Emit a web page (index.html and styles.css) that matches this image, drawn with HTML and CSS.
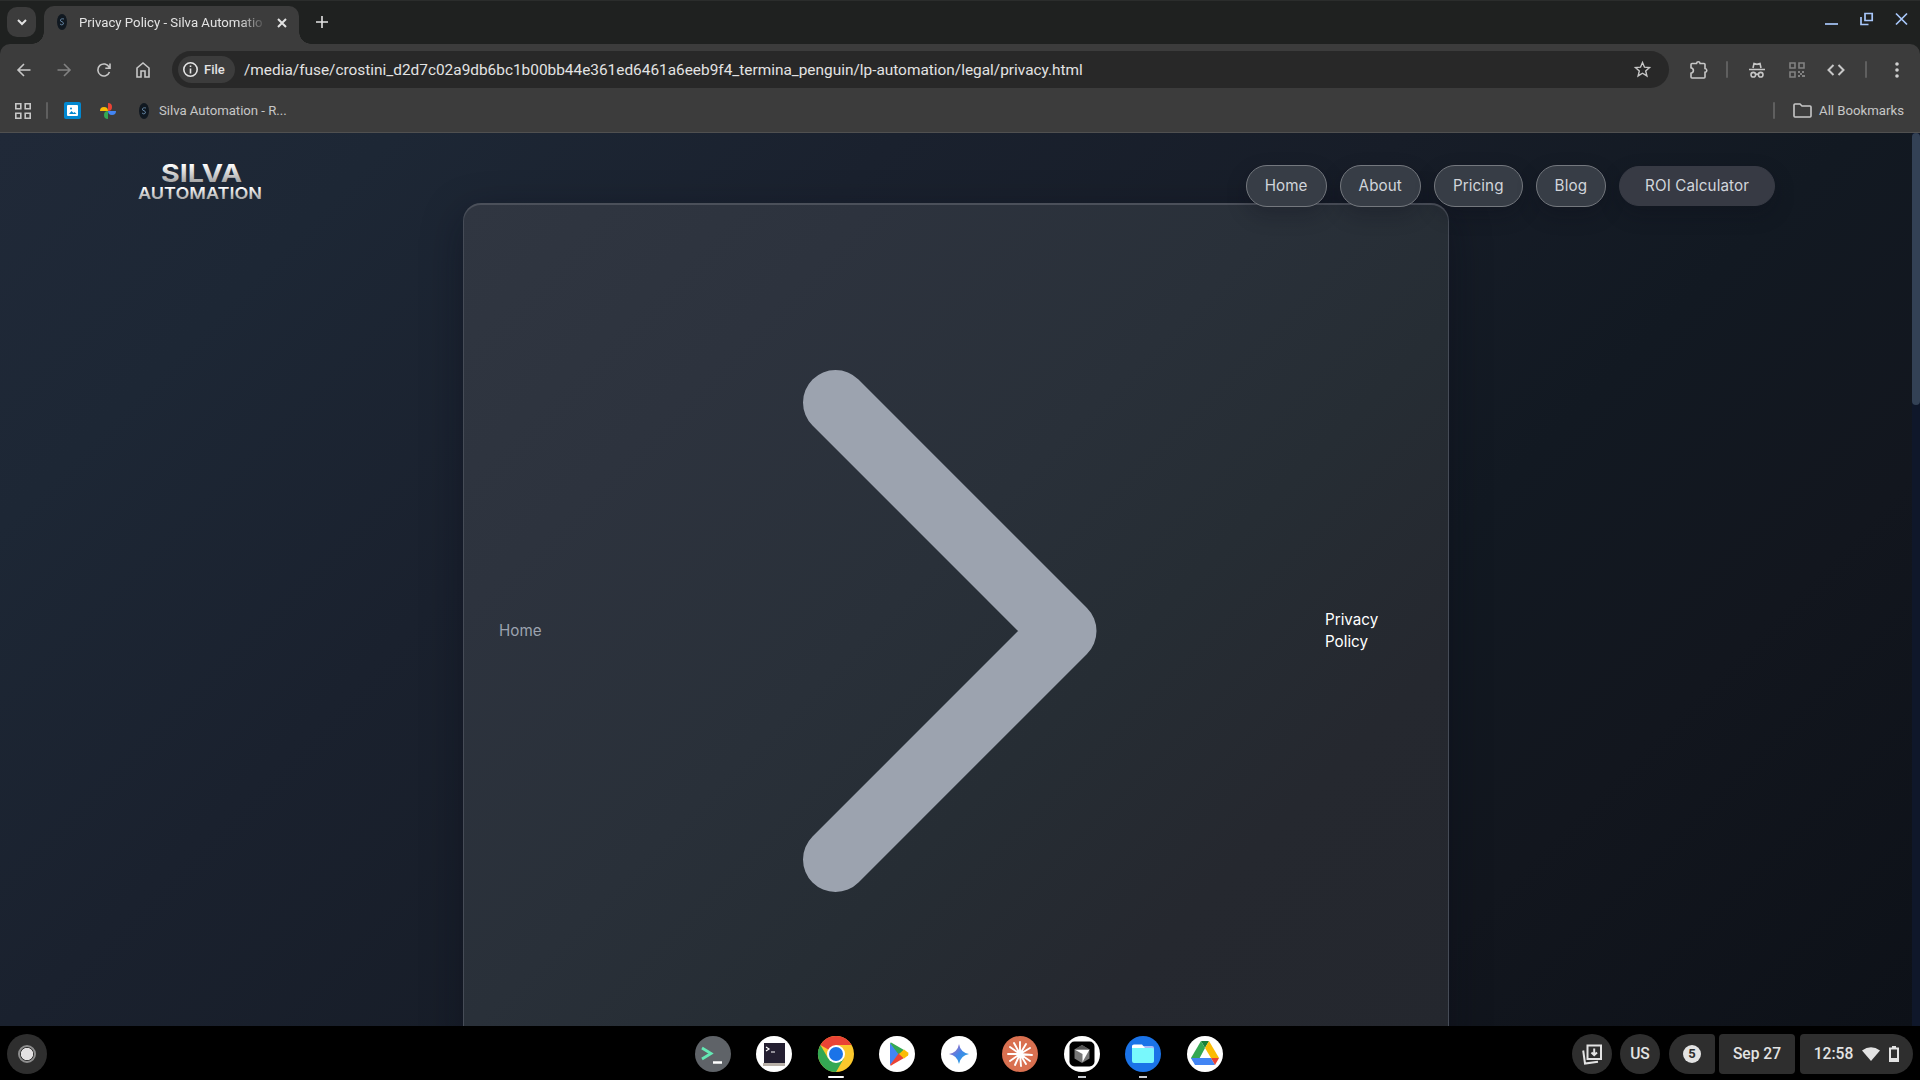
FILE: index.html
```
<!DOCTYPE html>
<html lang="en">
<head>
<meta charset="utf-8">
<title>Privacy Policy - Silva Automation</title>
<link rel="stylesheet" href="styles.css">
</head>
<body>
<div class="screen">
  <div class="tabstrip">
    <div class="tab-search"><svg width="12" height="12" viewBox="0 0 12 12"><path d="M2 4l4 4 4-4" class="line bright w2"/></svg></div>
    <div class="tab">
      <svg class="fav" width="12" height="18" viewBox="0 0 12 18"><ellipse cx="6" cy="9" rx="5" ry="8" fill="#101820"/><path d="M8 6Q4 5 4.500 8Q8 9 7.500 11Q6 13 4 11" fill="none" stroke="#607f9c"/></svg>
      <span class="tab-title">Privacy Policy - Silva Automation</span>
      <svg class="tab-close" width="10" height="10" viewBox="0 0 10 10"><path d="M1 1l8 8M9 1l-8 8" class="line bright w2"/></svg>
    </div>
    <svg class="new-tab" width="12" height="12" viewBox="0 0 12 12"><path d="M6 0v12M0 6h12" class="line bright"/></svg>
    <div class="window-controls">
      <svg width="13" height="14" viewBox="0 0 13 14"><path d="M0 12h13" class="win"/></svg>
      <svg width="13" height="14" viewBox="0 0 13 14"><path d="M5 1.500h7.200v7H5zM1 5v7.500h7.500" class="win"/></svg>
      <svg width="13" height="14" viewBox="0 0 13 14"><path d="M1 1.500l11 11M12 1.500l-11 11" class="win"/></svg>
    </div>
  </div>

  <div class="browser-frame">
  <div class="browser-bars">
    <div class="toolbar">
      <div class="nav-icons">
        <svg width="14" height="14" viewBox="0 0 14 14"><path d="M13.500 7H1M7 1L1 7l6 6" class="line"/></svg>
        <svg class="dim" width="14" height="14" viewBox="0 0 14 14"><path d="M.5 7H13M7 1l6 6-6 6" class="line"/></svg>
        <svg width="14" height="14" viewBox="0 0 14 14"><path d="M12.500 9A6 6 0 1 1 12.200 4.200M13 .5v4.700H8.300" class="line"/></svg>
        <svg class="house" width="14" height="16" viewBox="0 0 14 16"><path d="M1 15V6l6-5 6 5v9H9V9H5v6z" class="line"/></svg>
      </div>
      <div class="omnibox">
        <div class="file-chip"><svg width="15" height="15" viewBox="0 0 15 15"><circle cx="7.500" cy="7.500" r="6.700" class="line bright"/><path d="M7.500 6.500v5M7.500 3.500v1.600" class="line bright"/></svg>File</div>
        <span class="url">/media/fuse/crostini_d2d7c02a9db6bc1b00bb44e361ed6461a6eeb9f4_termina_penguin/lp-automation/legal/privacy.html</span>
        <svg width="17" height="17" viewBox="0 0 17 17"><path d="M8.500 1.500l2 4.700 5 .4-3.800 3.300 1.200 5-4.400-2.700-4.400 2.700 1.200-5L1.500 6.600l5-.4z" class="line thin"/></svg>
      </div>
      <div class="ext-icons">
        <svg class="puzzle" width="18" height="18" viewBox="0 0 18 18"><path d="M2 2.500h4.500q.3-1.700 1.800-1.700t1.800 1.700H14q1 0 1 1v4q1.800.3 1.800 1.900T15 11.300V16q0 1-1 1H2q-1 0-1-1v-3.800q2.400-.6 2.400-2.700T1 6.800V3.500q0-1 1-1z" class="line"/></svg>
        <i class="bar"></i>
        <svg class="incognito" width="16" height="16" viewBox="0 0 16 16"><path d="M4 6l1-4.500 3 .8 3-.8L12 6M0 7.500h16M6.800 12.500q1.200-.8 2.400 0" class="line"/><circle cx="4.300" cy="12.700" r="2.300" class="line"/><circle cx="11.700" cy="12.700" r="2.300" class="line"/></svg>
        <svg class="qr dim" width="16" height="16" viewBox="0 0 16 16"><path d="M1 1h5v5H1zM10 1h5v5h-5zM1 10h5v5H1z" class="line"/><path d="M9 9h2v2H9zM13 9h2v2h-2zM11 11h2v2h-2zM9 13h2v2H9zM13 13h3v2h-3z" fill="#c7c7c7"/></svg>
        <svg class="code" width="18" height="12" viewBox="0 0 18 12"><path d="M6.500 1L1.500 6l5 5M11.500 1l5 5-5 5" class="line w2"/></svg>
        <i class="bar b2"></i>
        <svg class="menu" width="4" height="16" viewBox="0 0 4 16"><g fill="#d0d0d0"><circle cx="2" cy="2" r="1.800"/><circle cx="2" cy="8" r="1.800"/><circle cx="2" cy="14" r="1.800"/></g></svg>
      </div>
    </div>
    <div class="bookmarks">
      <svg width="16" height="16" viewBox="0 0 16 16"><path d="M.8.800h5v5h-5zM10.200.800h5v5h-5zM.8 10.200h5v5h-5zM10.200 10.200h5v5h-5z" class="line"/></svg>
      <i class="bar bm1"></i>
      <svg class="picture" width="17" height="17" viewBox="0 0 17 17"><rect width="17" height="17" rx="2" fill="#0288d1"/><rect x="3" y="3" width="11" height="11" rx="1" fill="#fff"/><path d="M5 12l2.500-3 2 2 1-1 2 2z" fill="#0288d1"/><circle cx="7" cy="6.500" r="1" fill="#0288d1"/></svg>
      <svg class="photos" width="16" height="16" viewBox="0 0 16 16"><path d="M8 0a4 4 0 0 1 0 8z" fill="#ea4335"/><path d="M0 8a4 4 0 0 1 8 0z" fill="#fbbc04"/><path d="M8 16a4 4 0 0 1 0-8z" fill="#34a853"/><path d="M16 8a4 4 0 0 1-8 0z" fill="#4285f4"/></svg>
      <svg class="bm-fav" width="12" height="18" viewBox="0 0 12 18"><ellipse cx="6" cy="9" rx="5" ry="8" fill="#101820"/><path d="M8 6Q4 5 4.500 8Q8 9 7.500 11Q6 13 4 11" fill="none" stroke="#607f9c"/></svg>
      <span class="bm-title">Silva Automation - R...</span>
      <i class="bar bm2"></i>
      <svg width="19" height="15" viewBox="0 0 19 15"><path d="M1 2q0-1 1-1h5l2 2h8q1 0 1 1v9q0 1-1 1H2q-1 0-1-1z" class="line"/></svg>
      <span class="all">All Bookmarks</span>
    </div>
  </div>
  </div>

  <div class="page">
    <header class="site-header">
      <div class="brand">
        <svg width="126" height="44" viewBox="0 0 126 44">
          <defs><linearGradient id="metal" x1="0" y1="0" x2="0" y2="1"><stop offset=".2" stop-color="#fff"/><stop offset=".85" stop-color="#a0a0a0"/></linearGradient></defs>
          <text x="23" y="21.500" textLength="81" lengthAdjust="spacingAndGlyphs" class="brand-top">SILVA</text>
          <text x="0" y="39.200" textLength="124" lengthAdjust="spacingAndGlyphs" class="brand-sub">AUTOMATION</text>
        </svg>
      </div>
      <nav class="site-nav">
        <a class="pill">Home</a><a class="pill">About</a><a class="pill">Pricing</a><a class="pill">Blog</a><a class="pill cta">ROI Calculator</a>
      </nav>
    </header>
    <main class="crumbs">
      <span class="crumb-home">Home</span>
      <svg class="chevron" width="294" height="524" viewBox="0 0 294 524"><path d="M32.500 33.500L261 262 32.500 490.500"/></svg>
      <span class="crumb-now">Privacy Policy</span>
    </main>
    <div class="scroll-thumb"></div>
  </div>

  <div class="shelf">
    <div class="launcher"><i></i></div>
    <div class="apps">
      <svg width="36" height="54" viewBox="0 0 36 54"><circle cx="18" cy="27" r="18" fill="#5f6368"/><path d="M7 21l9 5.500L7 32" fill="none" stroke="#64e8b4" stroke-width="2.800"/><path d="M18 35.500h9" stroke="#fff" stroke-width="2.500"/></svg>
      <svg width="36" height="54" viewBox="0 0 36 54"><circle cx="18" cy="27" r="18" fill="#fff"/><path d="M7 36h22v3H7z" fill="#b8b0a8"/><path d="M8 16h21v20H8z" fill="#241f31"/><path d="M10 20l3 2-3 2M15 25h4" fill="none" stroke="#fff" stroke-width="1.200"/></svg>
      <svg width="36" height="54" viewBox="0 0 36 54"><circle cx="18" cy="27" r="18" fill="#fbc82c"/><path d="M18 27L2.400 18A18 18 0 0 1 33.600 18H18z" fill="#ea4335"/><path d="M2.400 18A18 18 0 0 0 18 45l7.800-13.500H10.200z" fill="#34a853"/><circle cx="18" cy="27" r="9" fill="#fff"/><circle cx="18" cy="27" r="7" fill="#1a73e8"/><path d="M11 50h14" stroke="#fff" stroke-width="2" stroke-linecap="round"/></svg>
      <svg width="36" height="54" viewBox="0 0 36 54"><circle cx="18" cy="27" r="18" fill="#fff"/><path d="M11 16v22l10-11z" fill="#4285f4"/><path d="M11 16q1-1 2 0l12 7-5 5z" fill="#34a853"/><path d="M11 38q1 1 2 0l12-7-5-5z" fill="#ea4335"/><path d="M25 22.500l4 3q1 1.500 0 3l-4 3-5-4.500z" fill="#fbbc04"/></svg>
      <svg width="36" height="54" viewBox="0 0 36 54"><defs><linearGradient id="spark" x1="0" y1="0" x2="1" y2="1"><stop offset=".2" stop-color="#9870c8"/><stop offset=".5" stop-color="#4286e8"/><stop offset="1" stop-color="#20b0dc"/></linearGradient></defs><circle cx="18" cy="27" r="18" fill="#fff"/><path d="M18 17Q19.500 25.500 28 27 19.500 28.500 18 37 16.500 28.500 8 27 16.500 25.500 18 17z" fill="url(#spark)"/></svg>
      <svg width="36" height="54" viewBox="0 0 36 54"><circle cx="18" cy="27" r="18" fill="#d97050"/><path d="M18 27V15M18 27l6-10M18 27l10-6M18 27l12 1M18 27l10 7M18 27l6 10M18 27l1 12M18 27l-5 11M18 27l-10 7M18 27H6M18 27L8 20M18 27l-6-11" stroke="#fff" stroke-width="1.900" stroke-linecap="round"/></svg>
      <svg width="36" height="54" viewBox="0 0 36 54"><circle cx="18" cy="27" r="18" fill="#fff"/><rect x="5.500" y="14.500" width="25" height="25" rx="5" fill="#000"/><path d="M18 18l7.500 4.500v9L18 36l-7.500-4.500v-9z" fill="#777"/><path d="M10.500 22.500h15L18.500 35v-8z" fill="#fff"/><path d="M18 18l7.500 4.500h-15z" fill="#555"/><path d="M14 50h8" stroke="#c8cbd0" stroke-width="2"/></svg>
      <svg width="36" height="54" viewBox="0 0 36 54"><circle cx="18" cy="27" r="18" fill="#1a73e8"/><path d="M18 19h9q2 0 2 2v4H18z" fill="#a8b8f8"/><path d="M7 19q0-1.500 2-1.500h8l3 3.500H7z" fill="#fff"/><path d="M7 21h20q2 0 2 2v11q0 2-2 2H9q-2 0-2-2z" fill="#78f8fc"/><path d="M14 50h8" stroke="#c8cbd0" stroke-width="2"/></svg>
      <svg width="36" height="54" viewBox="0 0 36 54"><circle cx="18" cy="27" r="18" fill="#fff"/><path d="M14 14h8l-4 7z" fill="#188038"/><path d="M14 14l4 7-9 17-5-7z" fill="#34a853"/><path d="M22 14l10 17h-8l-6-10z" fill="#fbbc04"/><path d="M4 31l4 7h20l-4-7z" fill="#4285f4"/><path d="M13.200 31h9.600L18 22.500z" fill="#fff"/><path d="M24 31h8l-4 7z" fill="#ea4335"/></svg>
    </div>
    <div class="status">
      <div class="round"><svg width="21" height="21" viewBox="0 0 21 21"><path d="M5.500 1.500h13.500v13.500H5.500z" class="line bright w2"/><path d="M12.200 4.500v6M9.500 8.500l2.700 2.700L15 8.500M1.200 6.500l1.800 13 13-1.800" class="line bright w2"/></svg></div>
      <div class="round lang">US</div>
      <div class="note"><b>5</b></div>
      <div class="date">Sep 27</div>
      <div class="clock">12:58
        <svg class="wifi" width="18" height="14" viewBox="0 0 18 14"><path d="M0 3.500Q9-3 18 3.500L9 14z" fill="#e3e3e3"/></svg>
        <svg width="10" height="16" viewBox="0 0 10 16"><path d="M3 0h4v2H3z" fill="#e3e3e3"/><path d="M1 2.500h8v12.500H1z" class="line bright w2"/><path d="M1 12h8v3H1z" fill="#e3e3e3"/></svg>
      </div>
    </div>
  </div>
</div>
</body>
</html>
```
FILE: styles.css
```
* { box-sizing: border-box; }
body { margin: 0; background: #000; font-family: Roboto, sans-serif; }
svg { display: block; flex: none; overflow: visible; }
.screen { width: 1920px; height: 1080px; overflow: hidden; display: flex; flex-direction: column; }

.line { fill: none; stroke: #c7c7c7; stroke-width: 1.6; }
.line.bright { stroke: #e3e3e3; }
.line.w2 { stroke-width: 2; }
.line.thin { stroke-width: 1.4; }
.win { fill: none; stroke: #a8c7fa; stroke-width: 1.7; }
.dim { opacity: .5; }
.bar { width: 2px; height: 17px; background: #5f5f5f; flex: none; border-radius: 1px; }

.tabstrip { height: 44px; flex: none; background: #1f2120; border-top: 1px solid #2b2d2c; display: flex; padding: 5px 12px 0 7px; }
.tab-search { width: 29px; height: 30px; margin-top: 1px; border-radius: 10px; background: #3c3c3c; display: flex; align-items: center; justify-content: center; }
.tab { width: 255px; height: 38px; margin-left: 8px; padding: 0 12px; border-radius: 10px 10px 0 0; background: #3c3c3c; display: flex; align-items: center; position: relative; }
.tab::before, .tab::after { content: ""; position: absolute; bottom: 0; width: 12px; height: 12px; }
.tab::before { left: -12px; background: radial-gradient(circle at 0 0, transparent 11.500px, #3c3c3c 12px); }
.tab::after { right: -12px; background: radial-gradient(circle at 100% 0, transparent 11.500px, #3c3c3c 12px); }
.fav { margin-top: -6px; }
.tab-title { width: 183px; margin: -6px 0 0 11px; overflow: hidden; white-space: nowrap; font-size: 13.200px; color: #e3e3e3; -webkit-mask-image: linear-gradient(90deg, #000 160px, transparent 188px); mask-image: linear-gradient(90deg, #000 160px, transparent 188px); }
.tab-close { margin: -4px 0 0 15px; }
.new-tab { margin: 10px 0 0 17px; }
.window-controls { margin: 6px 0 0 auto; display: flex; gap: 22px; }

.browser-frame { height: 89px; flex: none; background: #1f2120; }
.browser-bars { height: 89px; background: #3c3c3c; border-bottom: 1px solid #505050; border-radius: 10px 10px 0 0; }
.toolbar { height: 51px; display: flex; align-items: center; padding-left: 17px; }
.nav-icons { display: flex; align-items: center; gap: 26px; width: 155px; }
.house { margin-left: -1px; }
.omnibox { width: 1497px; height: 37px; border-radius: 19px; background: #282828; display: flex; align-items: center; padding: 0 18px 0 6px; }
.file-chip { height: 27px; width: 57px; border-radius: 14px; background: #3c3c3c; display: flex; align-items: center; gap: 6px; padding-left: 5px; font-size: 13px; font-weight: 500; color: #e3e3e3; }
.url { flex: 1; margin-left: 9px; font-size: 15.400px; color: #e3e3e3; white-space: nowrap; }
.ext-icons { display: flex; align-items: center; flex: 1; padding-left: 21px; }
.puzzle { margin-right: 18px; }
.incognito { margin-left: 21px; }
.qr { margin-left: 24px; }
.code { margin-left: 22px; }
.b2 { margin-left: 20px; }
.menu { margin-left: 28px; }
.bookmarks { height: 31px; display: flex; align-items: center; padding: 0 16px 0 15px; font-size: 13.200px; color: #c7c7c7; }
.bm1 { margin: 0 16px 0 15px; }
.photos { margin-left: 19px; }
.bm-fav { margin-left: 22px; }
.bm-title { margin-left: 9px; letter-spacing: -.03px; }
.bm2 { margin: 0 18px 0 auto; }
.all { margin-left: 7px; }

.page { height: 893px; flex: none; overflow: hidden; position: relative; background: linear-gradient(135deg, #202938 0%, #1d2735 14%, #1a212e 32%, #171d28 50%, #121922 66%, #12161e 80%, #0d1118 100%); font-family: Inter, sans-serif; }
.site-header { height: 70px; display: flex; justify-content: space-between; padding: 27px 145px 0 138px; position: relative; z-index: 2; }
.brand-top, .brand-sub { font-family: Inter, sans-serif; fill: url(#metal); }
.brand-top { font-size: 24px; font-weight: 700; }
.brand-sub { font-size: 16px; font-weight: 600; }
.site-nav { display: flex; align-items: center; gap: 13px; height: 42px; margin-top: 5px; }
.pill { height: 42px; padding: 0 18px; border: 1px solid #74787e; border-radius: 21px; background: #373d46; color: #d1d5db; font-size: 15.200px; line-height: 40px; letter-spacing: .1px; box-shadow: 0 8px 20px rgba(10, 12, 25, .25); white-space: nowrap; }
.pill.cta { height: 40px; border-color: #373a44; padding: 0 25px; line-height: 38px; background: #373a44; }
.crumbs { width: 986px; height: 855px; margin-left: 463px; padding: 0 68px 0 35px; display: flex; align-items: center; border: 1px solid #464c57; border-top: 2px solid #4b505a; border-radius: 18px; background: linear-gradient(135deg, #303641 0%, #2d333e 22%, #293039 45%, #262d34 60%, #25282f 78%, #24272e 100%); box-shadow: 0 12px 40px rgba(8, 10, 22, .4); font-size: 15.200px; line-height: 22px; }
.crumb-home { width: 304px; color: #9ca3af; }
.chevron path { fill: none; stroke: #9ca3af; stroke-width: 65px; stroke-linecap: round; stroke-linejoin: round; }
.crumb-now { margin-left: auto; width: 55px; color: #fff; }
.scroll-thumb { position: absolute; z-index: 3; right: 0; top: 0; width: 8px; height: 272px; border-radius: 4px; background: #334155; }
.page::after { content: ""; position: absolute; right: 0; top: 0; width: 8px; height: 100%; background: #0f172a; }

.shelf { height: 54px; flex: none; background: #000; display: grid; grid-template-columns: 695px 1fr 348px; }
.launcher { width: 40px; height: 40px; margin: 8px 0 0 7px; border-radius: 50%; background: #2e2e2e; display: flex; align-items: center; justify-content: center; }
.launcher i { width: 18px; height: 18px; border-radius: 50%; border: 2px solid #8e8e8e; background: radial-gradient(circle, #e3e1e2 5.800px, #2e2e2e 6.500px); }
.apps { display: flex; gap: 25.500px; padding-top: 1px; margin-left: -.5px; }
.status { display: flex; gap: 8px; padding-top: 8px; color: #e3e3e3; font-size: 15.600px; font-weight: 500; }
.status > div { height: 40px; background: #2e2e2e; display: flex; align-items: center; justify-content: center; }
.status .round { width: 40px; border-radius: 50%; }
.status .note { width: 46px; border-radius: 20px 4px 4px 20px; margin-left: 1px; }
.note b { width: 18px; height: 18px; border-radius: 50%; background: #e3e3e3; color: #2e2e2e; font-size: 13px; line-height: 18px; text-align: center; }
.status .date { width: 76px; border-radius: 4px; margin-left: -4px; }
.status .clock { width: 113px; border-radius: 4px 20px 20px 4px; margin-left: -3px; gap: 9px; }
```
